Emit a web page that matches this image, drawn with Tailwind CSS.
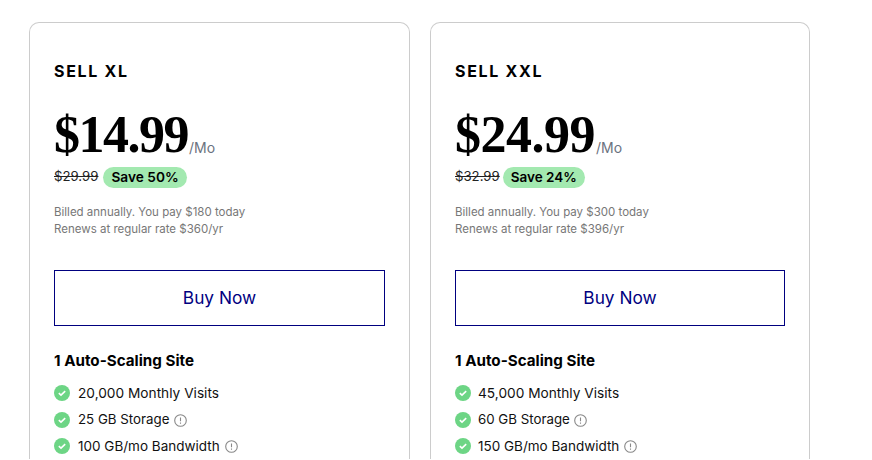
<!DOCTYPE html>
<html lang="en">
<head>
  <meta charset="UTF-8">
  <title>Pricing</title>
  <script src="https://cdn.jsdelivr.net/npm/@tailwindcss/browser@4"></script>
</head>
<body class="bg-white h-[460px] overflow-hidden font-['Inter',sans-serif]">
<div class="flex gap-5 pl-[29px] pt-[22px]">

  <!-- SELL XL -->
  <section class="w-[381px] h-[437px] shrink-0 border-x border-t border-[#ccc] rounded-t-[10px] px-6 pt-[37px]">
    <h2 class="text-[16px] leading-[22px] font-bold tracking-[1.7px] text-black">SELL XL</h2>
    <div class="flex items-end mt-[26px] h-[54px]">
      <span class="font-['Liberation_Serif',serif] font-bold text-[52px] leading-[54px] tracking-[-1.5px] text-black">$14.99</span>
      <span class="text-[14px] leading-[20px] text-[#6b7280] ml-px mb-[4px]">/Mo</span>
    </div>
    <div class="flex items-center gap-[5px] mt-[4px] h-[22px]">
      <span class="text-[13.2px] line-through text-[#222]">$29.99</span>
      <span class="bg-[#a3e9b0] rounded-full px-2 h-[21px] flex items-center text-[13.7px] font-semibold text-black">Save 50%</span>
    </div>
    <p class="mt-[16px] text-[11.5px] leading-[17px] text-[#777]">Billed annually. You pay $180 today<br>Renews at regular rate $360/yr</p>
    <button class="mt-[32px] w-[331px] h-14 border border-[#00007f] text-[#00007f] text-[17.3px]">Buy Now</button>
    <h3 class="mt-[25px] text-[15.2px] leading-5 font-bold text-black">1 Auto-Scaling Site</h3>
    <ul class="mt-[9px] text-[13.7px] text-[#111]">
      <li class="flex items-center gap-2 h-[26.5px]">
        <svg class="w-4 h-4 shrink-0" viewBox="0 0 16 16"><circle cx="8" cy="8" r="8" fill="#6dd585"/><path d="M4.8 8.2l2.2 2 4.2-4" fill="none" stroke="#fff" stroke-width="1.6"/></svg>
        20,000 Monthly Visits
      </li>
      <li class="flex items-center gap-2 h-[26.5px]">
        <svg class="w-4 h-4 shrink-0" viewBox="0 0 16 16"><circle cx="8" cy="8" r="8" fill="#6dd585"/><path d="M4.8 8.2l2.2 2 4.2-4" fill="none" stroke="#fff" stroke-width="1.6"/></svg>
        <span class="text-[13.3px]">25 GB Storage</span>
        <svg class="w-[13px] h-[13px] -ml-[3px] mt-px shrink-0" viewBox="0 0 13 13"><circle cx="6.5" cy="6.5" r="5.8" fill="none" stroke="#888" stroke-width="1.1"/><path d="M6.5 3.4v3.8M6.5 8.6v1.1" stroke="#888" stroke-width="1.1"/></svg>
      </li>
      <li class="flex items-center gap-2 h-[26.5px]">
        <svg class="w-4 h-4 shrink-0" viewBox="0 0 16 16"><circle cx="8" cy="8" r="8" fill="#6dd585"/><path d="M4.8 8.2l2.2 2 4.2-4" fill="none" stroke="#fff" stroke-width="1.6"/></svg>
        <span class="text-[13.5px]">100 GB/mo Bandwidth</span>
        <svg class="w-[13px] h-[13px] -ml-[3px] mt-px shrink-0" viewBox="0 0 13 13"><circle cx="6.5" cy="6.5" r="5.8" fill="none" stroke="#888" stroke-width="1.1"/><path d="M6.5 3.4v3.8M6.5 8.6v1.1" stroke="#888" stroke-width="1.1"/></svg>
      </li>
    </ul>
  </section>

  <!-- SELL XXL -->
  <section class="w-[380px] h-[437px] shrink-0 border-x border-t border-[#ccc] rounded-t-[10px] px-6 pt-[37px]">
    <h2 class="text-[16px] leading-[22px] font-bold tracking-[1.7px] text-black">SELL XXL</h2>
    <div class="flex items-end mt-[26px] h-[54px]">
      <span class="font-['Liberation_Serif',serif] font-bold text-[52px] leading-[54px] tracking-[-0.5px] text-black">$24.99</span>
      <span class="text-[14px] leading-[20px] text-[#6b7280] ml-px mb-[4px]">/Mo</span>
    </div>
    <div class="flex items-center gap-[3px] mt-[4px] h-[22px]">
      <span class="text-[13.2px] line-through text-[#222]">$32.99</span>
      <span class="bg-[#a3e9b0] rounded-full px-2 h-[21px] flex items-center text-[13.5px] font-semibold text-black">Save 24%</span>
    </div>
    <p class="mt-[16px] text-[11.5px] leading-[17px] text-[#777]">Billed annually. You pay $300 today<br>Renews at regular rate $396/yr</p>
    <button class="mt-[32px] w-[330px] h-14 border border-[#00007f] text-[#00007f] text-[17.3px]">Buy Now</button>
    <h3 class="mt-[25px] text-[15.2px] leading-5 font-bold text-black">1 Auto-Scaling Site</h3>
    <ul class="mt-[9px] text-[13.7px] text-[#111]">
      <li class="flex items-center gap-[7px] h-[26.5px]">
        <svg class="w-4 h-4 shrink-0" viewBox="0 0 16 16"><circle cx="8" cy="8" r="8" fill="#6dd585"/><path d="M4.8 8.2l2.2 2 4.2-4" fill="none" stroke="#fff" stroke-width="1.6"/></svg>
        45,000 Monthly Visits
      </li>
      <li class="flex items-center gap-[7px] h-[26.5px]">
        <svg class="w-4 h-4 shrink-0" viewBox="0 0 16 16"><circle cx="8" cy="8" r="8" fill="#6dd585"/><path d="M4.8 8.2l2.2 2 4.2-4" fill="none" stroke="#fff" stroke-width="1.6"/></svg>
        <span class="text-[13.3px]">60 GB Storage</span>
        <svg class="w-[13px] h-[13px] -ml-[3px] mt-px shrink-0" viewBox="0 0 13 13"><circle cx="6.5" cy="6.5" r="5.8" fill="none" stroke="#888" stroke-width="1.1"/><path d="M6.5 3.4v3.8M6.5 8.6v1.1" stroke="#888" stroke-width="1.1"/></svg>
      </li>
      <li class="flex items-center gap-[7px] h-[26.5px]">
        <svg class="w-4 h-4 shrink-0" viewBox="0 0 16 16"><circle cx="8" cy="8" r="8" fill="#6dd585"/><path d="M4.8 8.2l2.2 2 4.2-4" fill="none" stroke="#fff" stroke-width="1.6"/></svg>
        <span class="text-[13.5px]">150 GB/mo Bandwidth</span>
        <svg class="w-[13px] h-[13px] -ml-[2px] mt-px shrink-0" viewBox="0 0 13 13"><circle cx="6.5" cy="6.5" r="5.8" fill="none" stroke="#888" stroke-width="1.1"/><path d="M6.5 3.4v3.8M6.5 8.6v1.1" stroke="#888" stroke-width="1.1"/></svg>
      </li>
    </ul>
  </section>

</div>
</body>
</html>
